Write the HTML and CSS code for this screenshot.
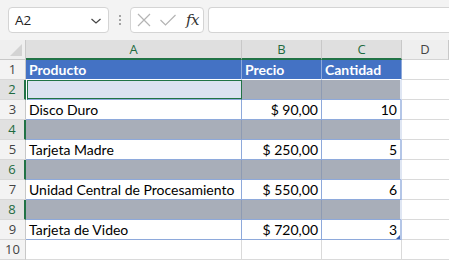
FILE: index.html
```html
<!DOCTYPE html>
<html>
<head>
<meta charset="utf-8">
<link rel="stylesheet" href="styles.css">
</head>
<body>
<div class="app">
  <div class="toolbar">
    <div class="namebox">
      <span class="name">A2</span>
      <svg class="chev" width="12" height="8" viewBox="0 0 12 8"><path d="M1.5 2 L6 6 L10.5 2" fill="none" stroke="#444" stroke-width="1.2"/></svg>
    </div>
    <div class="dots"><span></span><span></span><span></span></div>
    <div class="fxbox">
      <svg width="16" height="16" viewBox="0 0 16 16"><path d="M2 2 L14 14 M14 2 L2 14" stroke="#b4b4b4" stroke-width="1.2" fill="none"/></svg>
      <svg width="18" height="16" viewBox="0 0 18 16"><path d="M1.5 8 L6.5 13 L16.5 3" stroke="#b4b4b4" stroke-width="1.2" fill="none"/></svg>
      <span class="fx">fx</span>
    </div>
    <div class="formula"></div>
  </div>
  <div class="sheet">
    <div class="corner"><span class="tri"></span></div>
    <div class="ch sel">A</div>
    <div class="ch sel">B</div>
    <div class="ch sel">C</div>
    <div class="ch">D</div>

    <div class="rh">1</div>
    <div class="c hd">Producto</div>
    <div class="c hd">Precio</div>
    <div class="c hd">Cantidad</div>
    <div class="c out"></div>

    <div class="rh rsel">2</div>
    <div class="c active"></div>
    <div class="c gray"></div>
    <div class="c gray last"></div>
    <div class="c out"></div>

    <div class="rh">3</div>
    <div class="c tb">Disco Duro</div>
    <div class="c tb num">$ 90,00</div>
    <div class="c tb num last">10</div>
    <div class="c out"></div>

    <div class="rh rsel">4</div>
    <div class="c gray first"></div>
    <div class="c gray"></div>
    <div class="c gray last"></div>
    <div class="c out"></div>

    <div class="rh">5</div>
    <div class="c tb">Tarjeta Madre</div>
    <div class="c tb num">$ 250,00</div>
    <div class="c tb num last">5</div>
    <div class="c out"></div>

    <div class="rh rsel">6</div>
    <div class="c gray first"></div>
    <div class="c gray"></div>
    <div class="c gray last"></div>
    <div class="c out"></div>

    <div class="rh">7</div>
    <div class="c tb">Unidad Central de Procesamiento</div>
    <div class="c tb num">$ 550,00</div>
    <div class="c tb num last">6</div>
    <div class="c out"></div>

    <div class="rh rsel">8</div>
    <div class="c gray first"></div>
    <div class="c gray"></div>
    <div class="c gray last"></div>
    <div class="c out"></div>

    <div class="rh">9</div>
    <div class="c tb bot">Tarjeta de Video</div>
    <div class="c tb num bot">$ 720,00</div>
    <div class="c tb num last bot handle">3</div>
    <div class="c out"></div>

    <div class="rh">10</div>
    <div class="c"></div>
    <div class="c"></div>
    <div class="c"></div>
    <div class="c out"></div>
  </div>
</div>
</body>
</html>
```

FILE: styles.css
```css
* { box-sizing: border-box; }
html, body { margin: 0; padding: 0; background: #fff; }
body { font-family: Lato, "Open Sans", "Liberation Sans", sans-serif; overflow: hidden; width: 449px; height: 263px; }

.toolbar {
  height: 40px;
  background: #f3f3f3;
  display: flex;
  align-items: flex-start;
  padding: 7px 0 0 8px;
}
.namebox {
  width: 101px;
  height: 26px;
  background: #fff;
  border: 1px solid #d4d4d4;
  border-radius: 4px;
  display: flex;
  align-items: center;
  justify-content: space-between;
  padding: 0 6px 0 6px;
  font-family: "Open Sans", sans-serif;
  font-size: 13.5px;
  color: #222;
}
.chev { margin-top: 1px; }
.dots {
  width: 21px;
  height: 26px;
  display: flex;
  flex-direction: column;
  align-items: center;
  justify-content: center;
  gap: 2px;
}
.dots span { width: 2px; height: 2px; background: #8a8a8a; border-radius: 1px; }
.fxbox {
  width: 74px;
  height: 26px;
  background: #fff;
  border: 1px solid #d4d4d4;
  border-radius: 4px;
  display: flex;
  align-items: center;
  padding: 0 0 0 5px;
  gap: 7px;
}
.fx {
  font-family: "DejaVu Serif", "Liberation Serif", serif;
  font-style: italic;
  font-size: 15px;
  color: #333;
  margin-left: 2px;
  letter-spacing: -0.5px;
}
.formula {
  flex: 1;
  margin-left: 4px;
  height: 26px;
  background: #fff;
  border: 1px solid #d4d4d4;
  border-right: none;
  border-radius: 4px 0 0 4px;
}

.sheet {
  display: grid;
  grid-template-columns: 26px 216px 80px 80px 47px;
  grid-template-rows: 20px repeat(10, 20px);
  font-size: 14px;
  color: #000;
}
.corner {
  background: #efefef;
  border-right: 1px solid #c8c8c8;
  border-bottom: 1px solid #c8c8c8;
  position: relative;
}
.tri {
  position: absolute;
  right: 3px;
  bottom: 3px;
  width: 0; height: 0;
  border-left: 12px solid transparent;
  border-bottom: 12px solid #d3d3d3;
}
.ch {
  background: #efefef;
  border-right: 1px solid #c8c8c8;
  border-bottom: 1px solid #d4d4d4;
  text-align: center;
  line-height: 19px;
  color: #444;
  font-family: "Open Sans", sans-serif;
  font-size: 13px;
}
.ch.sel {
  background: #dfdfdf;
  color: #1e6b40;
  border-bottom: 2px solid #217346;
  line-height: 18px;
}
.rh {
  background: #f3f3f3;
  border-right: 1px solid #c8c8c8;
  border-bottom: 1px solid #d8d8d8;
  text-align: center;
  line-height: 19px;
  color: #444;
  font-family: "Open Sans", sans-serif;
  font-size: 13px;
}
.rh.rsel {
  background: #e1e1e1;
  color: #1e6b40;
  border-right: 2px solid #217346;
}
.c {
  border-right: 1px solid #dadada;
  border-bottom: 1px solid #dadada;
  line-height: 20px;
  padding: 0 3px;
  white-space: nowrap;
  overflow: hidden;
}
.c.out { border-right: none; }
.c.hd {
  background: #4472c4;
  color: #fff;
  font-weight: bold;
  border-right: 1px solid #8ea9db;
  border-bottom: 1px solid #fff;
}
.c.tb {
  border-right: 1px solid #8ea9db;
  border-bottom: 1px solid #8ea9db;
}
.c.num { text-align: right; }
.c.gray {
  background: #a8aeb9;
  border-right: 1px solid #8e9bb3;
  border-bottom: 1px solid #8ea9db;
}
.c.gray.last { border-right: 2px solid #dfe6f3; }
.c.tb.last { border-right: 2px solid #b4c6e7; }
.c.active {
  background: #dbe2f1;
  border: 1px solid #217346;
  border-bottom: 1px solid #8ea9db;
  box-shadow: inset 0 -1px 0 #217346;
  margin-left: 1px;
}
.c.handle { position: relative; }
.c.handle::after {
  content: "";
  position: absolute;
  right: 0;
  bottom: 0;
  width: 0; height: 0;
  border-left: 4px solid transparent;
  border-bottom: 4px solid #3c64b4;
}
```
